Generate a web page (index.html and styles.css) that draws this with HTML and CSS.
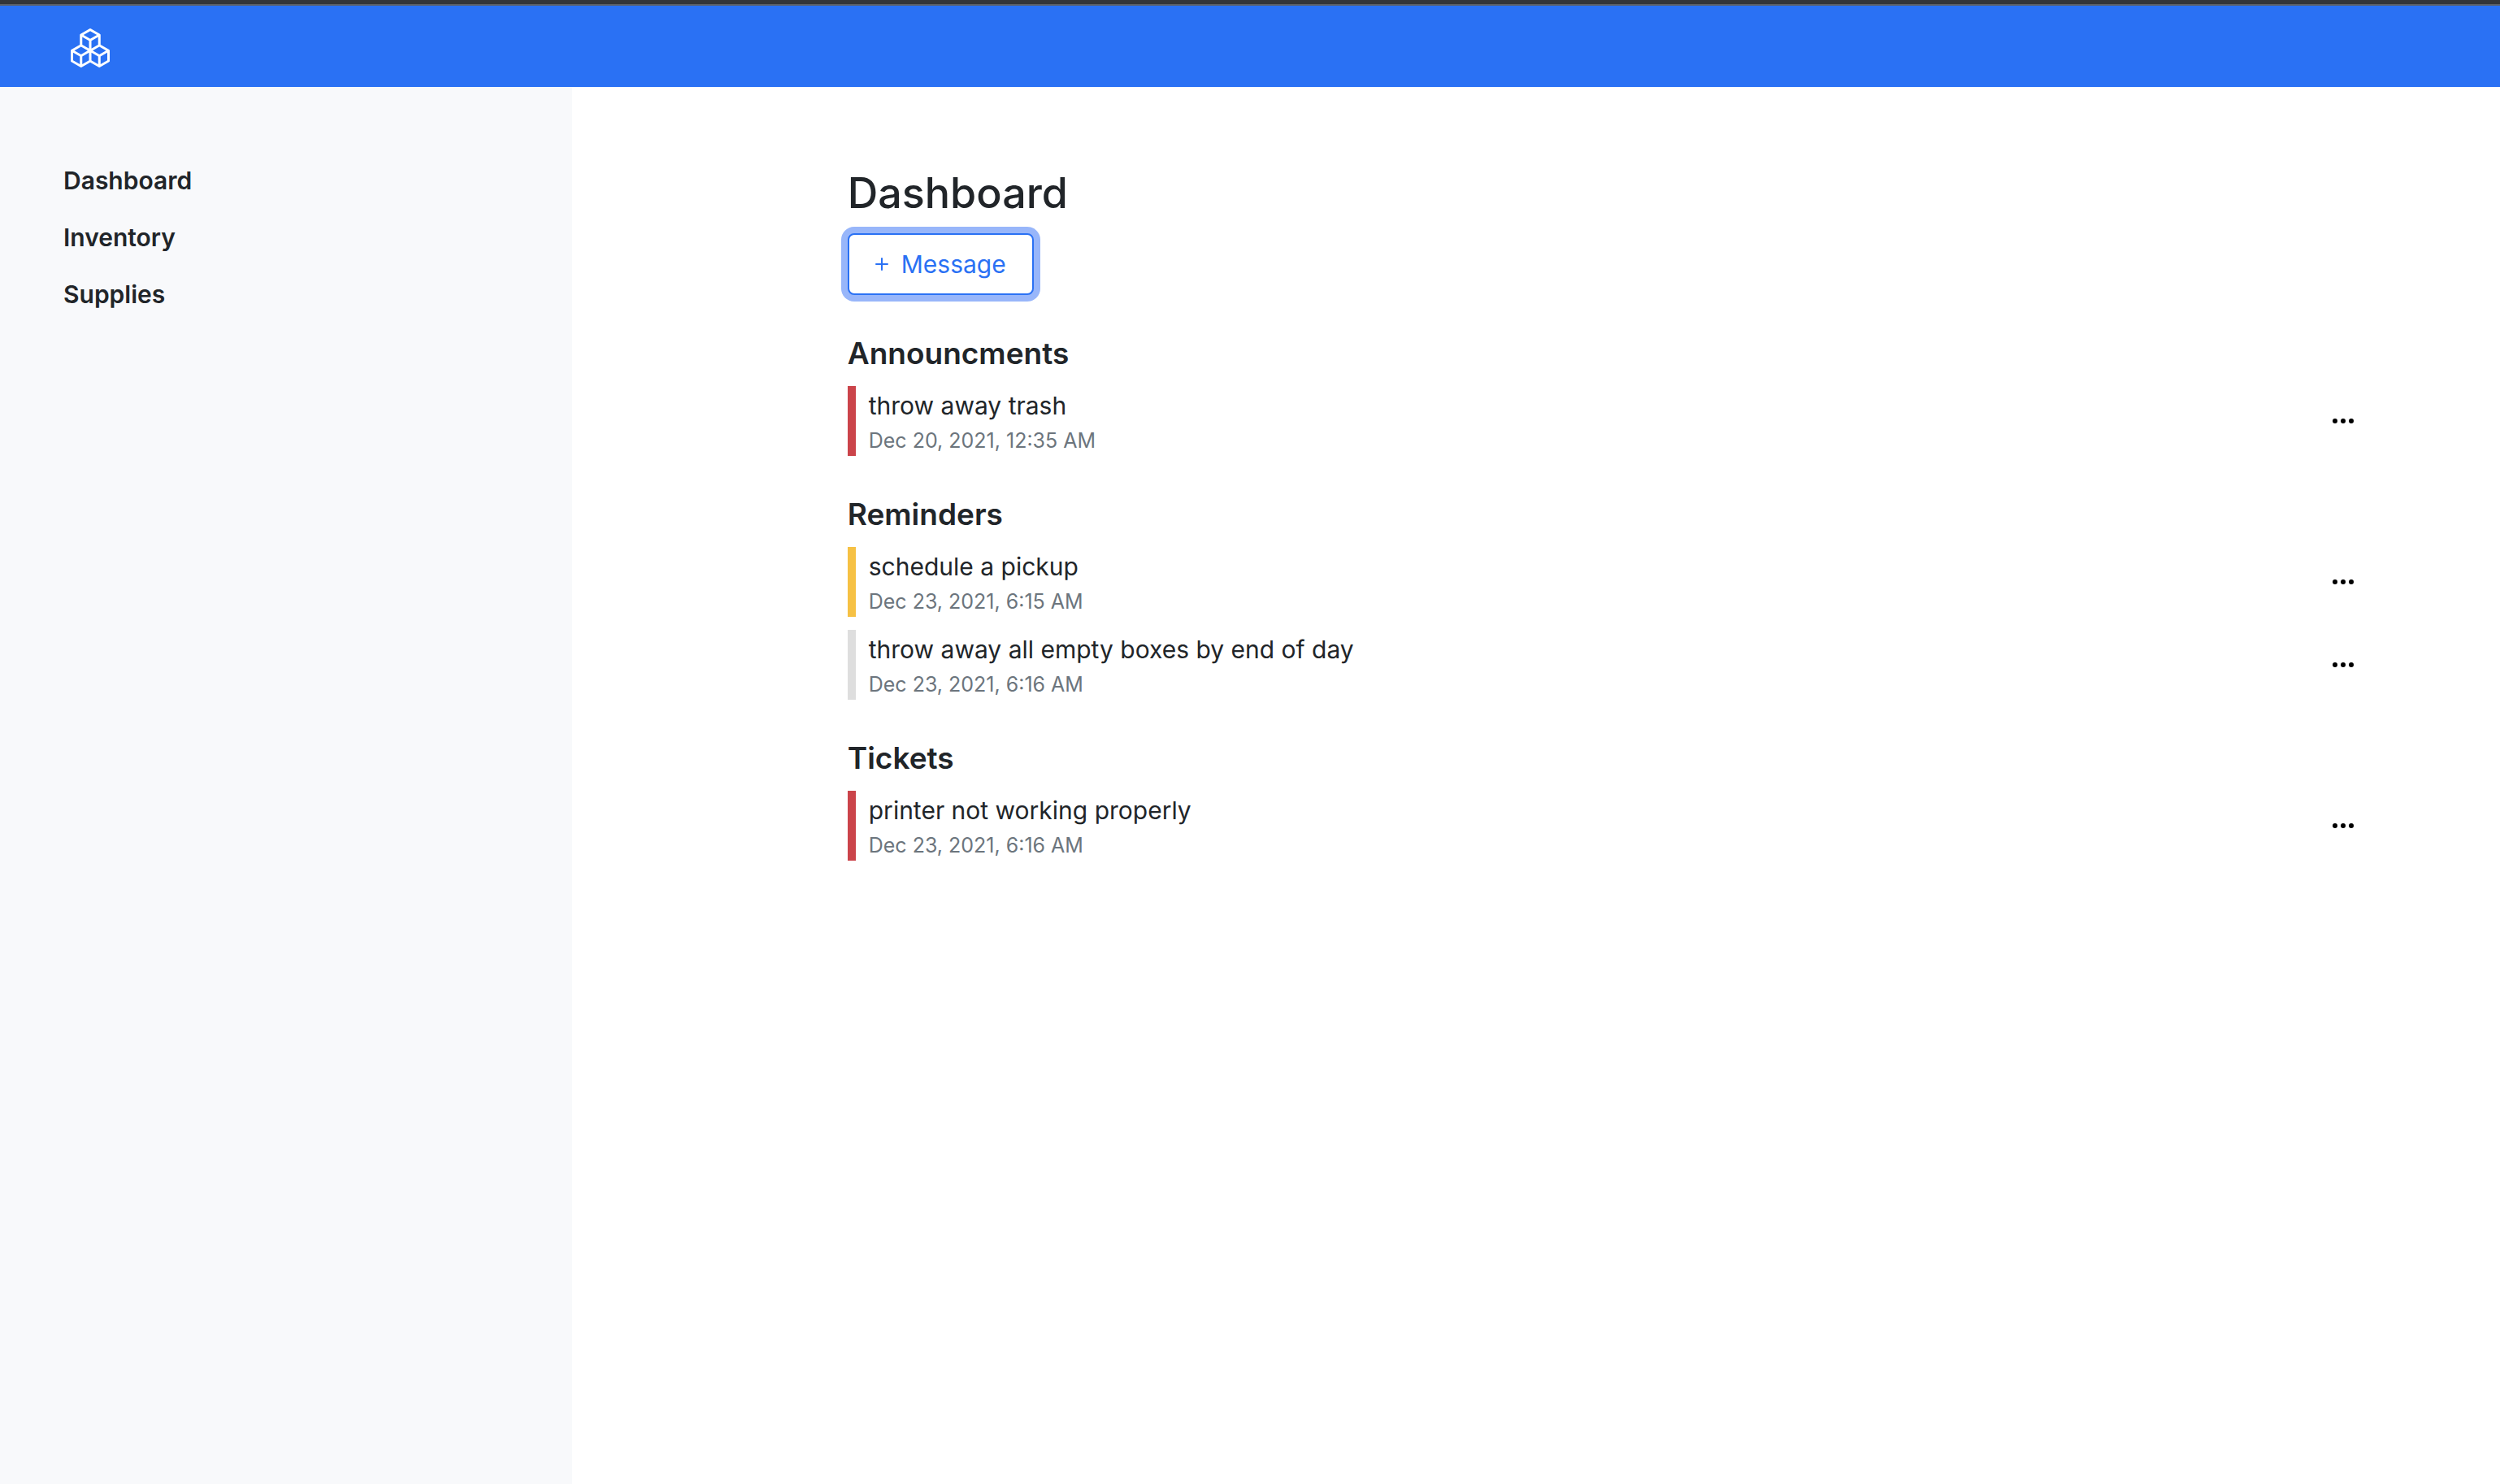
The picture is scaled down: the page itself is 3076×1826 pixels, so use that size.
FILE: index.html
```html
<!DOCTYPE html>
<html lang="en">
<head>
<meta charset="utf-8">
<title>Dashboard</title>
<link rel="stylesheet" href="styles.css">
</head>
<body>
<svg class="sprite" aria-hidden="true">
  <symbol id="dots" viewBox="0 0 16 16"><path d="M3 9.5a1.5 1.5 0 1 1 0-3 1.5 1.5 0 0 1 0 3zm5 0a1.5 1.5 0 1 1 0-3 1.5 1.5 0 0 1 0 3zm5 0a1.5 1.5 0 1 1 0-3 1.5 1.5 0 0 1 0 3z"/></symbol>
</svg>
<header class="topbar">
  <a class="brand" href="#" aria-label="Home">
    <svg class="brand-icon" viewBox="0 0 16 16"><path d="M7.752.066a.5.5 0 0 1 .496 0l3.75 2.143a.5.5 0 0 1 .252.434v3.995l3.498 2A.5.5 0 0 1 16 9.07v4.286a.5.5 0 0 1-.252.434l-3.75 2.143a.5.5 0 0 1-.496 0l-3.502-2-3.502 2.001a.5.5 0 0 1-.496 0l-3.75-2.143A.5.5 0 0 1 0 13.357V9.071a.5.5 0 0 1 .252-.434L3.75 6.638V2.643a.5.5 0 0 1 .252-.434L7.752.066ZM4.25 7.504 1.508 9.071l2.742 1.567 2.742-1.567L4.25 7.504ZM7.5 9.933l-2.75 1.571v3.134l2.75-1.571V9.933Zm1 3.134 2.75 1.571v-3.134L8.5 9.933v3.134Zm.508-3.996 2.742 1.567 2.742-1.567-2.742-1.567-2.742 1.567Zm2.242-2.433V3.504L8.5 5.076V8.21l2.75-1.572ZM7.5 8.21V5.076L4.75 3.504v3.134L7.5 8.21ZM5.258 2.643 8 4.21l2.742-1.567L8 1.076 5.258 2.643ZM15 9.933l-2.75 1.571v3.134L15 13.067V9.933ZM3.75 14.638v-3.134L1 9.933v3.134l2.75 1.571Z"/></svg>
  </a>
</header>
<div class="layout">
  <nav class="sidebar">
    <a class="nav-link" href="#">Dashboard</a>
    <a class="nav-link" href="#">Inventory</a>
    <a class="nav-link" href="#">Supplies</a>
  </nav>
  <main class="content">
    <h1 class="title">Dashboard</h1>
    <button class="btn-message" type="button"><svg class="icon" viewBox="0 0 16 16"><path d="M8 4a.5.5 0 0 1 .5.5v3h3a.5.5 0 0 1 0 1h-3v3a.5.5 0 0 1-1 0v-3h-3a.5.5 0 0 1 0-1h3v-3A.5.5 0 0 1 8 4z"/></svg>Message</button>
    <section class="group">
      <h2 class="group-title">Announcments</h2>
      <article class="item item-danger">
        <div class="item-body"><p class="item-text">throw away trash</p><time class="item-date">Dec 20, 2021, 12:35 AM</time></div>
        <button class="btn-more" type="button" aria-label="More options"><svg class="icon"><use href="#dots"/></svg></button>
      </article>
    </section>
    <section class="group">
      <h2 class="group-title">Reminders</h2>
      <article class="item item-warning">
        <div class="item-body"><p class="item-text">schedule a pickup</p><time class="item-date">Dec 23, 2021, 6:15 AM</time></div>
        <button class="btn-more" type="button" aria-label="More options"><svg class="icon"><use href="#dots"/></svg></button>
      </article>
      <article class="item">
        <div class="item-body"><p class="item-text">throw away all empty boxes by end of day</p><time class="item-date">Dec 23, 2021, 6:16 AM</time></div>
        <button class="btn-more" type="button" aria-label="More options"><svg class="icon"><use href="#dots"/></svg></button>
      </article>
    </section>
    <section class="group">
      <h2 class="group-title">Tickets</h2>
      <article class="item item-danger">
        <div class="item-body"><p class="item-text">printer not working properly</p><time class="item-date">Dec 23, 2021, 6:16 AM</time></div>
        <button class="btn-more" type="button" aria-label="More options"><svg class="icon"><use href="#dots"/></svg></button>
      </article>
    </section>
  </main>
</div>
</body>
</html>
```
FILE: styles.css
```css
* { box-sizing: border-box; }

body {
  margin: 0;
  min-height: 100vh;
  display: flex;
  flex-direction: column;
  font-family: Inter, "Liberation Sans", sans-serif;
  font-size: 30px;
  line-height: 48px;
  color: #212529;
  background: #fff;
}

.sprite { display: none; }

.topbar {
  padding: 28px 87px 24px;
  background: #2a71f4;
  border-top: 5px solid #333539;
  box-shadow: inset 0 2px #5c6066;
}

.brand { display: block; width: 48px; }

.brand-icon {
  display: block;
  width: 48px;
  height: 48px;
  margin-top: 2px;
  fill: #fff;
}

.layout { display: flex; flex: 1; }

.sidebar {
  display: flex;
  flex-direction: column;
  gap: 22px;
  width: 22.9%;
  padding: 91px 78px;
  background: #f8f9fb;
}

.nav-link {
  color: #212529;
  font-weight: 600;
  text-decoration: none;
}

.content {
  flex: 1;
  padding: 97px 151px 96px 11%;
}

.title {
  margin: 0 0 16px;
  font-size: 52px;
  line-height: 67px;
  font-weight: 500;
}

.btn-message {
  display: flex;
  align-items: center;
  gap: 8px;
  padding: 12px 32px 12px 24px;
  border: 2px solid #2a71f4;
  border-radius: 8px;
  background: #fff;
  box-shadow: 0 0 0 8px #98b6fa;
  color: #2a71f4;
  font: inherit;
}

.icon {
  display: block;
  width: 32px;
  height: 32px;
  fill: currentColor;
}

.group { margin-top: 48px; }

.group-title {
  margin: 0 0 16px;
  font-size: 37px;
  line-height: 48px;
  font-weight: 600;
}

.item {
  display: flex;
  align-items: center;
  justify-content: space-between;
  border-left: 10px solid #dedede;
  padding-left: 16px;
}

.item + .item { margin-top: 16px; }

.item-danger { border-left-color: #cb444a; }
.item-warning { border-left-color: #f6c144; }

.item-text { margin: 0; }

.item-date {
  display: block;
  font-size: 25px;
  line-height: 38px;
  color: #6c757d;
}

.btn-more {
  padding: 12px 26px;
  border: 0;
  background: none;
  color: #000;
}
```
